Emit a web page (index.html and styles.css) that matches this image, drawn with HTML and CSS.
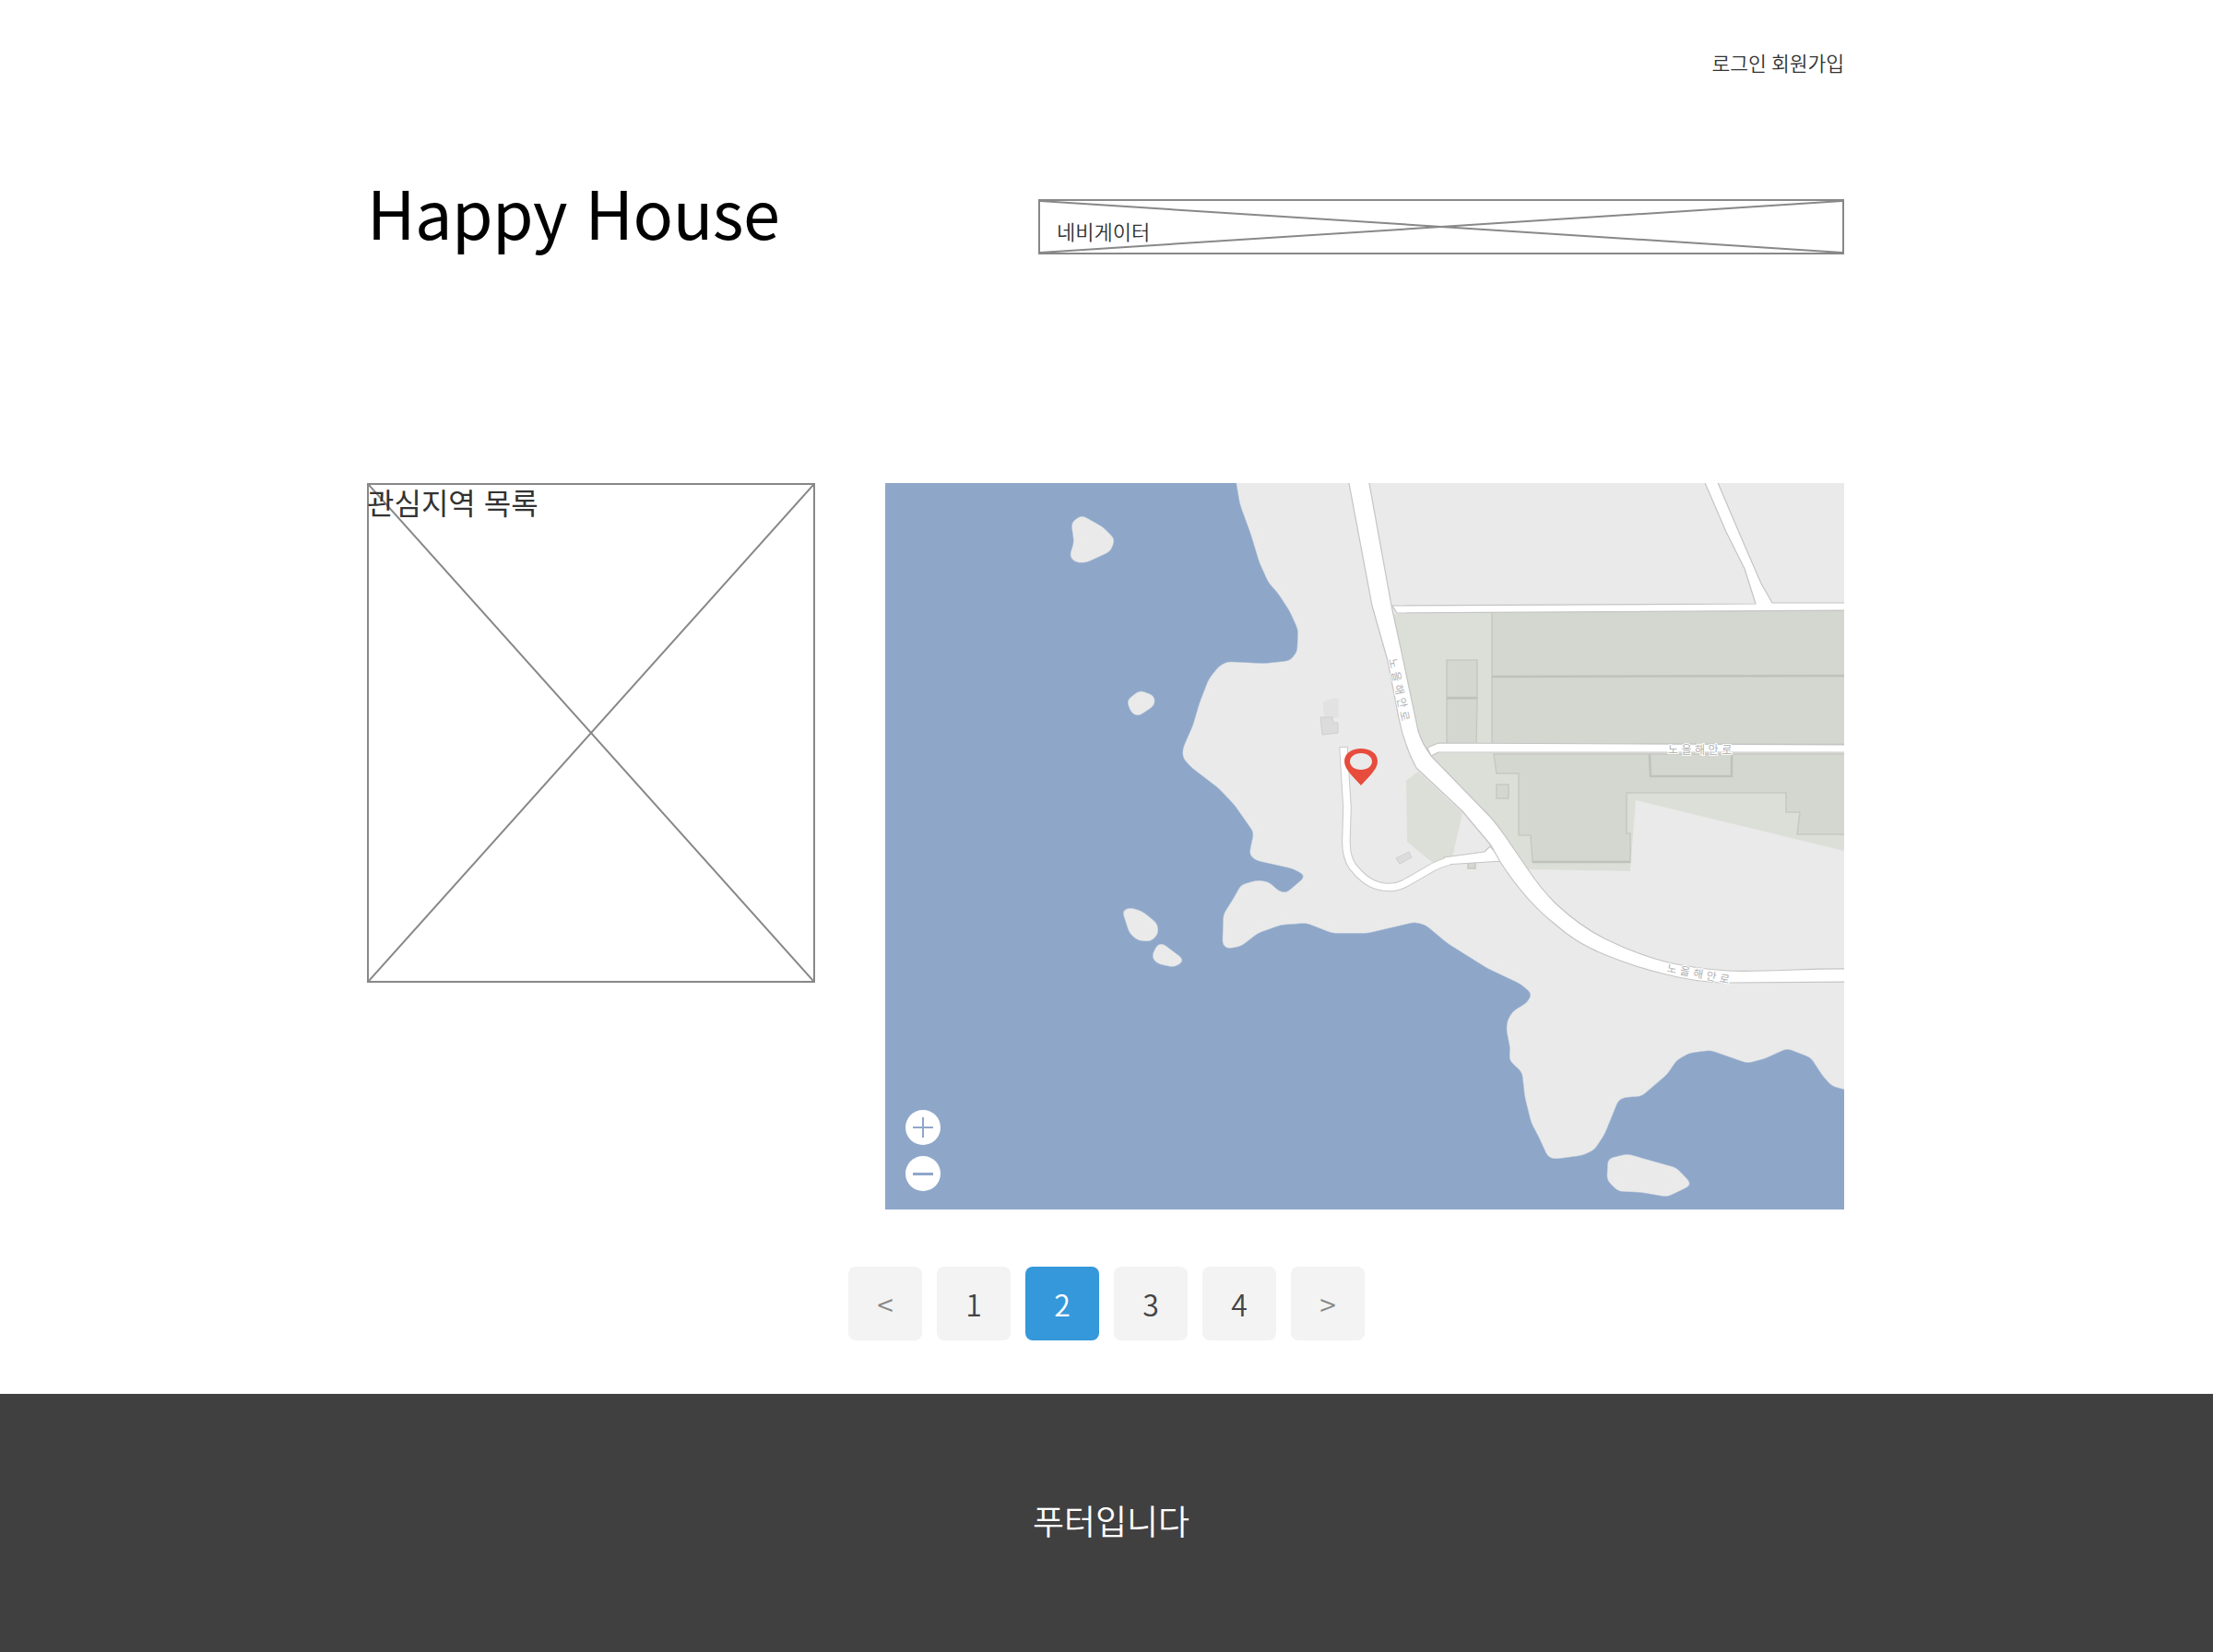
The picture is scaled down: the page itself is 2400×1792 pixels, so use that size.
FILE: index.html
```html
<!DOCTYPE html>
<html lang="ko">
<head>
    <meta charset="UTF-8">
    <meta name="viewport" content="width=device-width, initial-scale=1.0">
    <title>Happy House</title>
    <link rel="stylesheet" href="styles.css">
</head>
<body>
    <div class="container">
        <div class="top-links">
            <a href="#">로그인</a>
            <a href="#">회원가입</a>
        </div>

        <header class="header">
            <h1>Happy House</h1>
            <nav class="nav-box">
                <svg class="placeholder" viewBox="0 0 100 100" preserveAspectRatio="none" aria-hidden="true">
                    <line x1="0" y1="0" x2="100" y2="100" vector-effect="non-scaling-stroke"/>
                    <line x1="100" y1="0" x2="0" y2="100" vector-effect="non-scaling-stroke"/>
                </svg>
                <span class="nav-label">네비게이터</span>
            </nav>
        </header>

        <main class="content">
            <section class="favorites">
                <svg class="placeholder" viewBox="0 0 100 100" preserveAspectRatio="none" aria-hidden="true">
                    <line x1="0" y1="0" x2="100" y2="100" vector-effect="non-scaling-stroke"/>
                    <line x1="100" y1="0" x2="0" y2="100" vector-effect="non-scaling-stroke"/>
                </svg>
                <span class="favorites-title">관심지역 목록</span>
            </section>

            <div class="map">
                <svg class="map-canvas" viewBox="0 0 1040 788" aria-hidden="true">
                    <defs>
                        <filter id="smooth" filterUnits="userSpaceOnUse" x="-40" y="-40" width="1120" height="868" color-interpolation-filters="sRGB">
                            <feGaussianBlur stdDeviation="3"/>
                            <feComponentTransfer>
                                <feFuncA type="linear" slope="6" intercept="-2.3"/>
                            </feComponentTransfer>
                        </filter>
                    </defs>

                    <!-- land and islands -->
                    <g class="land" filter="url(#smooth)">
                        <polygon points="379,-30 381,0 385,23 397,56 406,86 416,108 426,119 439,139 448,159 447,183 439,193 411,196 371,194 362,199 351,213 341,239 334,263 323,288 323,298 332,308 362,331 379,349 400,379 395,403 402,409 442,418 457,426 442,439 435,445 427,443 416,433 404,431 386,436 379,449 367,468 366,501 371,505 386,502 404,488 429,479 457,477 485,488 523,488 574,476 586,479 610,499 653,526 689,543 702,554 696,564 681,573 675,583 674,593 678,613 677,626 691,639 694,666 701,694 709,709 719,731 726,733 756,729 769,723 780,706 795,669 802,666 820,665 848,641 858,626 872,618 895,615 935,629 954,624 978,613 1004,623 1017,643 1027,654 1070,665 1070,-30"/>
                        <polygon points="202,43 213,35 236,48 249,61 244,74 218,86 207,86 200,80 205,64"/>
                        <polygon points="262,236 276,225 292,231 292,241 274,253 267,249"/>
                        <polygon points="257,463 267,461 279,465 295,478 296,489 288,497 274,496 265,488"/>
                        <polygon points="300,499 325,518 313,525 295,521 289,514 295,501"/>
                        <polygon points="784,733 805,728 858,743 875,761 848,774 819,769 795,768 783,756"/>
                    </g>

                    <!-- green areas -->
                    <polygon class="green" points="548,142 1040,138 1040,290 575,290 560,200"/>
                    <polygon class="green" points="590,293 1040,293 1040,399 814,344 808,421 697,419 650,370"/>
                    <polygon class="green" points="565,323 578,313 626,358 615,406 594,412 566,389"/>

                    <!-- buildings -->
                    <rect class="building" x="658" y="138" width="390" height="146"/>
                    <line class="building-line" x1="658" y1="210" x2="1048" y2="209"/>
                    <line class="building-line" x1="658" y1="284" x2="1048" y2="284"/>
                    <rect class="building" x="609" y="192" width="33" height="41"/>
                    <polygon class="building" points="609,234 642,234 641,284 611,284 609,281"/>
                    <line class="building-line" x1="609" y1="233" x2="642" y2="233"/>
                    <polygon class="building" points="660,294 1048,294 1048,381 989,381 992,357 977,357 977,336 804,336 804,380 808,380 808,411 702,411 700,382 687,382 687,315 663,315"/>
                    <polyline class="building-line" points="829,294 830,318 918,318 918,294"/>
                    <line class="building-line" x1="702" y1="411" x2="808" y2="411"/>
                    <rect class="building" x="663" y="327" width="13" height="15"/>
                    <rect class="building" x="632" y="411" width="8" height="7"/>
                    <polygon class="house faint" points="475,238 485,234 491,234 491,254 477,255"/>
                    <polygon class="house" points="472,254 485,254 486,260 491,260 491,271 474,273"/>
                    <polygon class="house" points="554,407 568,400 571,406 558,413"/>

                    <!-- roads -->
                    <path class="road-lane" d="M497,286 L499,320 L501,352 L500,385 Q499,405 507,416 Q520,433 535,437 Q550,441 562,435 Q575,428 590,419 Q600,413 612,410"/>
                    <polygon class="road" points="606,406 650,400 656,394 670,410 606,414"/>
                    <path class="road-lane-fill" d="M497,287 L499,320 L501,352 L500,385 Q499,405 507,416 Q520,433 535,437 Q550,441 562,435 Q575,428 590,419 Q600,413 612,410"/>
                    <polygon class="road" points="887,-5 912,53 932,93 944,131 550,133 555,141 1050,138 1050,130 962,130 950,109 930,63 901,-5"/>
                    <polygon class="road" points="588,287 600,282 1050,284 1050,292 600,292 592,296"/>
                    <path class="road" d="M502,-5 L528,133 L545,193 L557,255 Q563,285 576,309 L626,356 L657,393 L667,411 C680,431 700,458 727,479 C745,495 760,502 772,508 C800,520 825,528 847,533 C870,539 890,542 914,542 L1050,541 L1050,527 C1000,526 950,531 914,529 C885,527 860,524 835,516 C815,510 798,503 780,494 C760,484 742,470 727,456 C715,444 705,431 697,419 L673,384 Q665,372 657,363 L592,296 Q582,282 578,269 L562,193 L549,133 L524,-5 Z"/>

                    <!-- road names -->
                    <text class="road-name" transform="translate(546 191) rotate(78)">노을해안로</text>
                    <text class="road-name" x="849" y="294">노을해안로</text>
                    <text class="road-name" transform="translate(847 530) rotate(11)">노을해안로</text>
                </svg>

                <svg class="marker" viewBox="0 0 36 40" aria-hidden="true">
                    <path fill-rule="evenodd" d="M18 40C12 33 0 23 0 14C0 5 8 0 18 0C28 0 36 5 36 14C36 23 24 33 18 40ZM18 5C11 5 6 9 6 14C6 19 11 23 18 23C25 23 30 19 30 14C30 9 25 5 18 5Z"/>
                </svg>

                <div class="zoom-controls">
                    <button class="zoom-btn zoom-in" aria-label="확대"></button>
                    <button class="zoom-btn zoom-out" aria-label="축소"></button>
                </div>
            </div>
        </main>

        <div class="pager">
            <a class="page arrow" href="#">&lt;</a>
            <a class="page" href="#">1</a>
            <a class="page active" href="#">2</a>
            <a class="page" href="#">3</a>
            <a class="page" href="#">4</a>
            <a class="page arrow" href="#">&gt;</a>
        </div>
    </div>

    <footer class="footer">푸터입니다</footer>
</body>
</html>
```

FILE: styles.css
```css
* {
    box-sizing: border-box;
}

body {
    margin: 0;
    background-color: #fff;
    color: #333;
    font-family: "Noto Sans CJK KR", "Noto Sans", sans-serif;
    font-weight: 350;
}

a {
    color: inherit;
    text-decoration: none;
}

.container {
    width: 1602px;
    height: 1512px;
    margin-left: 398px;
}

/* top links */
.top-links {
    display: flex;
    justify-content: flex-end;
    gap: 5px;
    height: 216px;
    padding-top: 52px;
    font-size: 21.5px;
    line-height: 32px;
}

/* header */
.header {
    display: flex;
    justify-content: space-between;
    height: 308px;
}

h1 {
    margin: -40px 0 0;
    color: #000;
    font-size: 72px;
    font-weight: 400;
    letter-spacing: -0.5px;
    line-height: 106px;
}

.nav-box {
    position: relative;
    width: 874px;
    height: 60px;
    border: 2px solid #888;
    padding: 17px 0 0 18px;
    font-size: 22px;
    line-height: 30px;
}

.placeholder {
    position: absolute;
    top: 0;
    left: 0;
    width: 100%;
    height: 100%;
}

.placeholder line {
    stroke: #888;
    stroke-width: 2;
}

.nav-label,
.favorites-title {
    position: relative;
}

/* main */
.content {
    display: flex;
    justify-content: space-between;
    align-items: flex-start;
}

.favorites {
    position: relative;
    width: 486px;
    height: 542px;
    border: 2px solid #888;
    font-size: 32px;
    font-weight: 400;
    line-height: 36px;
}

.favorites-title {
    left: -2px;
}

.map {
    position: relative;
    width: 1040px;
    height: 788px;
    overflow: hidden;
    background-color: #8ea7c9;
}

.map-canvas {
    display: block;
    width: 1040px;
    height: 788px;
}

.land {
    fill: #eaeaea;
}

.green {
    fill: #dcdfd7;
}

.building {
    fill: #d4d7d0;
    stroke: #c6c9c1;
    stroke-width: 1.5;
}

.building-line {
    fill: none;
    stroke: #bfc2ba;
    stroke-width: 2.5;
}

.house {
    fill: #dcdcdc;
    stroke: #cfcfcf;
}

.house.faint {
    fill: #e2e2e2;
    stroke: #e2e2e2;
}

.road {
    fill: #fff;
    stroke: #c4c4c4;
    stroke-width: 1.2;
    stroke-linejoin: round;
}

.road-lane,
.road-lane-fill {
    fill: none;
    stroke-linejoin: round;
}

.road-lane {
    stroke: #c8c8c8;
    stroke-width: 9.5;
}

.road-lane-fill {
    stroke: #fff;
    stroke-width: 7.5;
}

.road-name {
    fill: #aaa;
    stroke: #fff;
    stroke-width: 2px;
    paint-order: stroke;
    font-size: 12px;
    letter-spacing: 3.5px;
}

.marker {
    position: absolute;
    top: 288px;
    left: 498px;
    width: 36px;
    height: 40px;
    fill: #e74c3c;
}

.zoom-controls {
    position: absolute;
    top: 680px;
    left: 22px;
    display: flex;
    flex-direction: column;
    gap: 12px;
}

.zoom-btn {
    position: relative;
    width: 38px;
    height: 38px;
    border: 0;
    border-radius: 50%;
    padding: 0;
    background-color: #fff;
}

.zoom-btn::before,
.zoom-in::after {
    content: "";
    position: absolute;
    background-color: #8ea7c9;
}

.zoom-btn::before {
    top: 18px;
    left: 8px;
    width: 22px;
    height: 2px;
}

.zoom-out::before {
    height: 3px;
}

.zoom-in::after {
    top: 8px;
    left: 18px;
    width: 2px;
    height: 22px;
}

/* pagination */
.pager {
    display: flex;
    gap: 16px;
    margin: 62px 0 0 522px;
}

.page {
    width: 80px;
    height: 80px;
    border-radius: 8px;
    background-color: #f3f3f3;
    color: #444;
    font-size: 32px;
    line-height: 80px;
    text-align: center;
}

.page.arrow {
    color: #888;
}

.page.active {
    background-color: #3498db;
    color: #fff;
}

/* footer */
.footer {
    display: flex;
    justify-content: center;
    align-items: center;
    height: 280px;
    padding: 0 0 6px 10px;
    background-color: #404040;
    color: #fff;
    font-size: 37px;
}
```
